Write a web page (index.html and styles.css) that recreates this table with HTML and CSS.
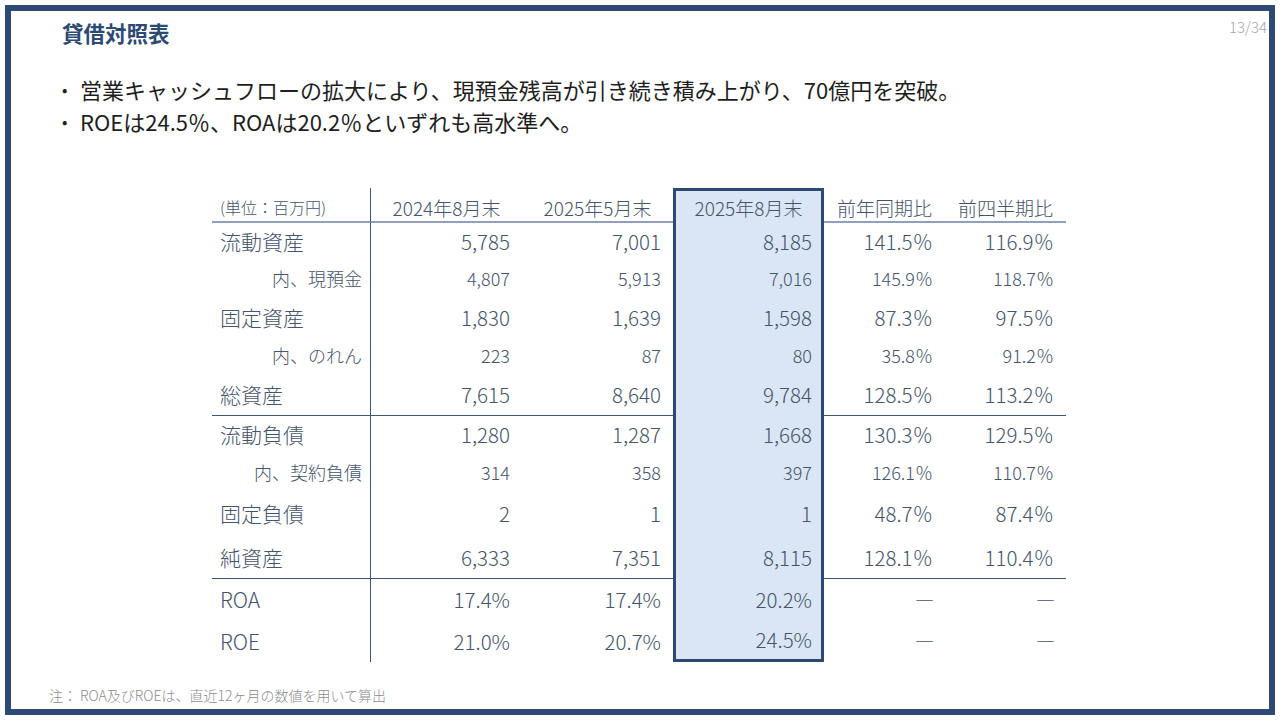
FILE: index.html
```html
<!DOCTYPE html>
<html lang="ja">
<head>
<meta charset="utf-8">
<title>貸借対照表</title>
<link rel="stylesheet" href="styles.css">
</head>
<body>
<div class="slide">
  <header class="slide-head">
    <h1 class="title">貸借対照表</h1>
    <span class="page">13/34</span>
  </header>
  <ul class="points">
    <li>営業キャッシュフローの拡大により、現預金残高が引き続き積み上がり、70億円を突破。</li>
    <li>ROEは24.5％、ROAは20.2％といずれも高水準へ。</li>
  </ul>
  <div class="bs">
    <div class="c lab head unit">(単位：百万円)</div>
    <div class="c head ctr">2024年8月末</div>
    <div class="c head ctr">2025年5月末</div>
    <div class="c head ctr hc">2025年8月末</div>
    <div class="c head ctr">前年同期比</div>
    <div class="c head ctr">前四半期比</div>

    <div class="c lab main">流動資産</div>
    <div class="c num main">5,785</div>
    <div class="c num main">7,001</div>
    <div class="c num main hc">8,185</div>
    <div class="c num main">141.5％</div>
    <div class="c num main">116.9％</div>

    <div class="c lab sub">内、現預金</div>
    <div class="c num sub">4,807</div>
    <div class="c num sub">5,913</div>
    <div class="c num sub hc">7,016</div>
    <div class="c num sub">145.9％</div>
    <div class="c num sub">118.7％</div>

    <div class="c lab main">固定資産</div>
    <div class="c num main">1,830</div>
    <div class="c num main">1,639</div>
    <div class="c num main hc">1,598</div>
    <div class="c num main">87.3％</div>
    <div class="c num main">97.5％</div>

    <div class="c lab sub">内、のれん</div>
    <div class="c num sub">223</div>
    <div class="c num sub">87</div>
    <div class="c num sub hc">80</div>
    <div class="c num sub">35.8％</div>
    <div class="c num sub">91.2％</div>

    <div class="c lab main">総資産</div>
    <div class="c num main">7,615</div>
    <div class="c num main">8,640</div>
    <div class="c num main hc">9,784</div>
    <div class="c num main">128.5％</div>
    <div class="c num main">113.2％</div>

    <div class="c lab main sec">流動負債</div>
    <div class="c num main sec">1,280</div>
    <div class="c num main sec">1,287</div>
    <div class="c num main hc">1,668</div>
    <div class="c num main sec">130.3％</div>
    <div class="c num main sec">129.5％</div>

    <div class="c lab sub">内、契約負債</div>
    <div class="c num sub">314</div>
    <div class="c num sub">358</div>
    <div class="c num sub hc">397</div>
    <div class="c num sub">126.1％</div>
    <div class="c num sub">110.7％</div>

    <div class="c lab main">固定負債</div>
    <div class="c num main">2</div>
    <div class="c num main">1</div>
    <div class="c num main hc">1</div>
    <div class="c num main">48.7％</div>
    <div class="c num main">87.4％</div>

    <div class="c lab main">純資産</div>
    <div class="c num main">6,333</div>
    <div class="c num main">7,351</div>
    <div class="c num main hc">8,115</div>
    <div class="c num main">128.1％</div>
    <div class="c num main">110.4％</div>

    <div class="c lab main sec">ROA</div>
    <div class="c num main sec">17.4%</div>
    <div class="c num main sec">17.4%</div>
    <div class="c num main hc">20.2%</div>
    <div class="c num main sec dash">―</div>
    <div class="c num main sec dash">―</div>

    <div class="c lab main">ROE</div>
    <div class="c num main">21.0%</div>
    <div class="c num main">20.7%</div>
    <div class="c num main hc last">24.5%</div>
    <div class="c num main dash">―</div>
    <div class="c num main dash">―</div>
  </div>
  <p class="note">注： ROA及びROEは、直近12ヶ月の数値を用いて算出</p>
</div>
</body>
</html>
```

FILE: styles.css
```css
html, body {
  margin: 0;
  padding: 0;
  background: #ffffff;
}

.slide {
  box-sizing: border-box;
  width: 1270px;
  height: 710px;
  margin: 5px;
  border: 6px solid #2c4a73;
  display: flex;
  flex-direction: column;
  font-family: "Noto Sans CJK JP", "Noto Sans", sans-serif;
  color: #222222;
}

.slide-head {
  display: flex;
  justify-content: space-between;
  align-items: flex-start;
  padding: 7px 2px 0 51px;
}

.title {
  margin: 0;
  font-size: 21.5px;
  line-height: 30px;
  font-weight: 700;
  color: #2c4a73;
}

.page {
  margin-top: 1px;
  font-size: 15px;
  line-height: 16px;
  font-weight: 300;
  color: #a6a6a6;
}

.points {
  list-style: none;
  margin: 25px 0 0 0;
  padding: 0 0 0 51px;
}

.points li {
  display: flex;
  font-size: 22px;
  line-height: 32px;
  color: #1e1e1e;
}

.points li::before {
  content: "•";
  width: 18px;
  flex: none;
  font-size: 16px;
}

.bs {
  display: grid;
  grid-template-columns: 159px 151px 151px 151px 121px 121px;
  grid-template-rows: 35px 36px 38px 39px 37px 42px 37px 39px 44px 43px 41px 43px;
  margin: 51px 0 0 201px;
  width: 854px;
  color: #44546a;
}

.c {
  display: flex;
  align-items: center;
  box-sizing: border-box;
  white-space: nowrap;
  font-weight: 300;
}

.lab {
  border-right: 1px solid #3c5478;
}

.head {
  align-items: flex-end;
  padding-bottom: 1px;
  font-size: 19px;
  line-height: 24px;
  border-bottom: 2px solid #8ea0bb;
}

.unit {
  font-size: 16px;
  padding-left: 8px;
  padding-bottom: 2px;
}

.ctr {
  justify-content: center;
}

.main {
  font-size: 20.5px;
}

.sub {
  font-size: 18px;
}

.lab.main {
  padding-left: 8px;
  font-size: 21px;
}

.lab.sub {
  justify-content: flex-end;
  padding-right: 8px;
}

.num {
  justify-content: flex-end;
  padding-right: 12px;
}

.sec {
  border-top: 1px solid #3c5478;
}

.dash {
  padding-right: 11px;
  font-size: 19px;
}

.hc {
  background: #dae6f5;
  border-left: 3px solid #2c4a73;
  border-right: 3px solid #2c4a73;
}

.num.hc {
  padding-right: 9px;
}

.head.hc {
  border-top: 3px solid #2c4a73;
  border-bottom: 0;
  padding-bottom: 3px;
}

.hc.last {
  border-bottom: 3px solid #2c4a73;
}

.note {
  margin: auto 0 5px 0;
  padding-left: 38px;
  font-size: 14px;
  line-height: 18px;
  font-weight: 300;
  color: #8c8c8c;
}
```
